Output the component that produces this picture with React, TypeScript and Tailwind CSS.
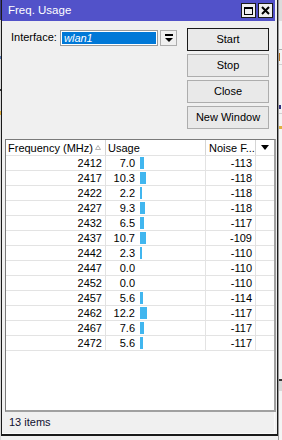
import React from "react";

const rows: [number, number, number][] = [
  [2412, 7.0, -113],
  [2417, 10.3, -118],
  [2422, 2.2, -118],
  [2427, 9.3, -118],
  [2432, 6.5, -117],
  [2437, 10.7, -109],
  [2442, 2.3, -110],
  [2447, 0.0, -110],
  [2452, 0.0, -110],
  [2457, 5.6, -114],
  [2462, 12.2, -117],
  [2467, 7.6, -117],
  [2472, 5.6, -117],
];

function WinButton({ label, primary }: { label: string; primary?: boolean }) {
  return (
    <div
      className={
        "h-[23px] flex items-center justify-center text-[11px] text-black bg-[#e9e9e9] border " +
        (primary ? "border-[#1b1b1b]" : "border-[#adadad]")
      }
    >
      {label}
    </div>
  );
}

// bar width for the usage column
const barW = (u: number) => (u > 0 ? Math.max(2, Math.round(u * 0.55)) : 0);

export default function App() {
  return (
    <div className="w-[282px] h-[440px] bg-[#f0f0f0] flex overflow-hidden font-['Liberation_Sans',Arial,sans-serif] text-black">
      {/* left strip of app behind */}
      <div className="w-[1px] h-full flex flex-col bg-[#d8d8d8]">
        <div className="h-[20px] bg-[#3a3a8a]" />
        <div className="h-[36px]" />
        <div className="h-[3px] bg-[#5a7ab0]" />
        <div className="h-[30px]" />
        <div className="h-[2px] bg-[#333]" />
        <div className="h-[20px]" />
        <div className="h-[4px] bg-[#e0b040]" />
      </div>

      {/* window */}
      <div className="w-[277px] h-[436px] border-l border-r border-b-2 border-[#1a1a1a] bg-[#f0f0f0] flex flex-col">
        {/* title bar */}
        <div className="h-[21px] mr-[2px] bg-[#5252c9] flex items-center pl-[6px] pr-[2px]">
          <span className="text-white text-[11.5px] leading-none">Freq. Usage</span>
          <div className="ml-auto flex gap-[2px]">
            <div className="w-[15px] h-[15px] border border-[#1a1a1a] bg-[#f0f0f0] flex items-center justify-center">
              <div className="w-[9px] h-[8px] border border-t-2 border-black" />
            </div>
            <div className="w-[15px] h-[15px] border border-[#1a1a1a] bg-[#f0f0f0] flex items-center justify-center">
              <svg width="9" height="9" viewBox="0 0 9 9">
                <path d="M1 1 L8 8 M8 1 L1 8" stroke="#000" strokeWidth="2" />
              </svg>
            </div>
          </div>
        </div>

        {/* top controls */}
        <div className="flex h-[118px] pt-[7px]">
          <div className="flex items-start pt-[2px] pl-[9px]">
            <span className="text-[11px] leading-[15px] w-[49px]">Interface:</span>
            <div className="w-[98px] h-[16px] border border-[#9a9a9a] bg-white p-[1px]">
              <div className="h-full bg-[#0078d7] text-white italic text-[11px] leading-[12px] pl-[2px]">wlan1</div>
            </div>
            <div className="ml-[2px] w-[17px] h-[16px] border border-[#adadad] bg-[#f0f0f0] flex items-center justify-center">
              <svg width="8" height="9" viewBox="0 0 8 9">
                <path d="M0 1 H8" stroke="#000" strokeWidth="2" />
                <path d="M0 4 H8 L4 8 Z" fill="#000" />
              </svg>
            </div>
          </div>
          <div className="ml-[10px] w-[82px] flex flex-col gap-[3px]">
            <WinButton label="Start" primary />
            <WinButton label="Stop" />
            <WinButton label="Close" />
            <WinButton label="New Window" />
          </div>
        </div>

        {/* table */}
        <div className="ml-[3px] mr-[1px] h-[273px] border-l border-t border-[#7a7a7a] border-r-2 border-b-2 border-r-[#a0a0a0] border-b-[#a0a0a0] bg-white flex flex-col text-[11px]">
          <div className="flex h-[16px] leading-[16px] border-b border-[#e3e3e3]">
            <div className="w-[100px] border-r border-[#d5d5d5] pl-[2px] flex items-center">
              <span>Frequency (MHz)</span>
              <svg className="ml-auto mr-[4px]" width="6" height="5" viewBox="0 0 6 5">
                <path d="M3 0.5 L5.5 4.5 H0.5 Z" fill="none" stroke="#b0b0b0" strokeWidth="1" />
              </svg>
            </div>
            <div className="w-[100px] border-r border-[#d5d5d5] pl-[2px]">Usage</div>
            <div className="w-[50px] border-r border-[#d5d5d5] pl-[3px]">Noise F...</div>
            <div className="w-[18px] flex items-center justify-center">
              <svg width="8" height="5" viewBox="0 0 8 5">
                <path d="M0 0 H8 L4 5 Z" fill="#000" />
              </svg>
            </div>
          </div>
          {rows.map(([f, u, n]) => (
            <div key={f} className="flex h-[15px] leading-[14px] border-b border-[#e3e3e3]">
              <div className="w-[100px] border-r border-[#e3e3e3] text-right pr-[3px]">{f}</div>
              <div className="w-[100px] border-r border-[#e3e3e3] flex">
                <span className="w-[29px] text-right">{u.toFixed(1)}</span>
                <div className="ml-[5px] pt-[1px]">
                  <div className="h-[12px] bg-[#41b6ef]" style={{ width: barW(u) }} />
                </div>
              </div>
              <div className="w-[50px] border-r border-[#e3e3e3] text-right pr-[3px]">{n}</div>
              <div className="w-[18px]" />
            </div>
          ))}
        </div>

        {/* status bar */}
        <div className="flex-1 mr-[2px] border-r border-b border-[#fafafa] flex items-center pl-[7px] text-[11px] text-[#101030]">
          13 items
        </div>
      </div>

      {/* right strip of app behind */}
      <div className="flex-1 h-full flex flex-col bg-[#f4f4f4] border-l border-[#9a9a9a]">
        <div className="h-[21px] bg-[#dcdcdc]" />
        <div className="h-[28px]" />
        <div className="h-[1px] bg-[#b0b0b0]" />
        <div className="h-[14px] flex items-center">
          <div className="w-[1px] h-[8px] bg-[#b07020]" />
        </div>
        <div className="h-[1px] bg-[#d0d0d0]" />
        <div className="h-[36px]" />
        <div className="h-[12px] flex items-center">
          <div className="w-[2px] h-[4px] bg-[#303080]" />
        </div>
        <div className="h-[1px] bg-[#d0d0d0]" />
        <div className="h-[12px]" />
        <div className="h-[3px] bg-[#e0b040]" />
        <div className="h-[250px]" />
        <div className="h-[2px] bg-[#333]" />
        <div className="h-[10px] bg-[#d8d8d8]" />
      </div>
    </div>
  );
}
